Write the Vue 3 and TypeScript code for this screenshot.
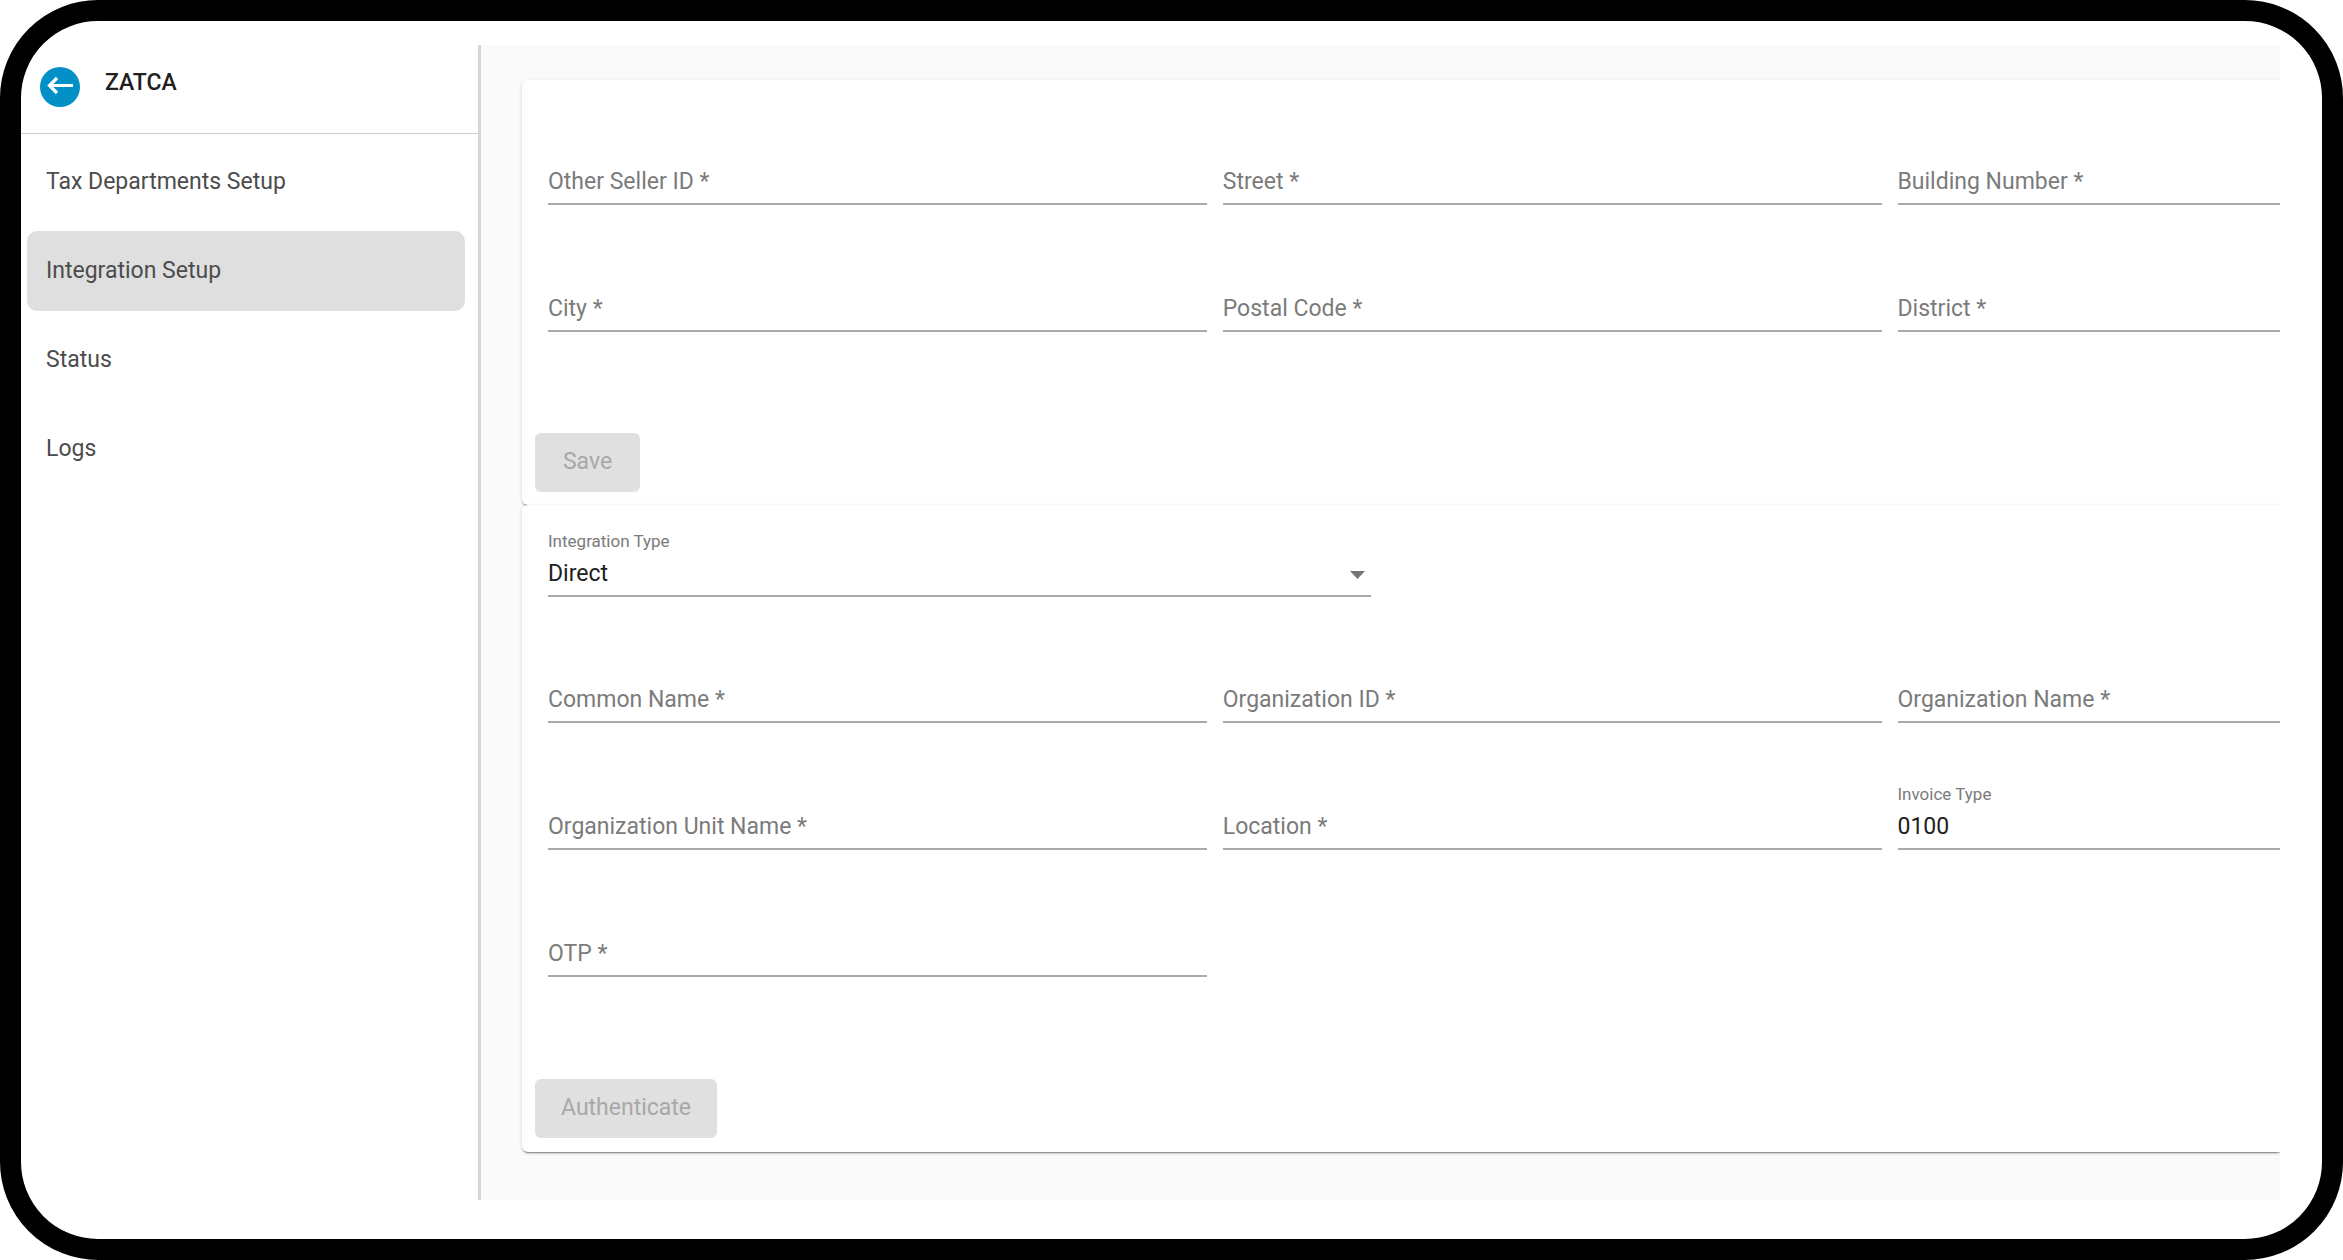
<script setup lang="ts">
import { ref } from 'vue'

interface Field {
  id: string
  label: string
  value: string
}

const navItems = ['Tax Departments Setup', 'Integration Setup', 'Status', 'Logs']
const activeItem = ref('Integration Setup')

const addressFields = ref<Field[]>([
  { id: 'seller', label: 'Other Seller ID *', value: '' },
  { id: 'street', label: 'Street *', value: '' },
  { id: 'building', label: 'Building Number *', value: '' },
  { id: 'city', label: 'City *', value: '' },
  { id: 'postal', label: 'Postal Code *', value: '' },
  { id: 'district', label: 'District *', value: '' },
])

const integrationType = ref('Direct')

const organizationFields = ref<Field[]>([
  { id: 'common', label: 'Common Name *', value: '' },
  { id: 'org-id', label: 'Organization ID *', value: '' },
  { id: 'org-name', label: 'Organization Name *', value: '' },
  { id: 'org-unit', label: 'Organization Unit Name *', value: '' },
  { id: 'location', label: 'Location *', value: '' },
  { id: 'invoice', label: 'Invoice Type', value: '0100' },
  { id: 'otp', label: 'OTP *', value: '' },
])
</script>

<template>
  <div class="frame">
    <aside class="sidebar">
      <header class="sidebar-head">
        <button class="back" type="button" aria-label="Back">
          <svg viewBox="0 0 40 40" width="40" height="40" aria-hidden="true">
            <circle cx="20" cy="20" r="20" fill="#0290c7" />
            <path d="M33 18.500H9.500M17 11l-7.500 7.500L17 26" fill="none" stroke="#fff" stroke-width="3.200" />
          </svg>
        </button>
        <h1>ZATCA</h1>
      </header>
      <nav>
        <a
          v-for="item in navItems"
          :key="item"
          href="#"
          :class="{ active: item === activeItem }"
          @click.prevent="activeItem = item"
        >{{ item }}</a>
      </nav>
    </aside>

    <main>
      <form class="card address" @submit.prevent>
        <div class="fields">
          <div v-for="f in addressFields" :key="f.id" class="field" :class="{ filled: f.value }">
            <label :for="f.id">{{ f.label }}</label>
            <input :id="f.id" v-model="f.value" type="text" />
          </div>
        </div>
        <button class="submit" type="submit" disabled>Save</button>
      </form>

      <form class="card integration" @submit.prevent>
        <div class="field filled type">
          <label for="type">Integration Type</label>
          <select id="type" v-model="integrationType">
            <option>Direct</option>
          </select>
          <svg class="caret" viewBox="0 0 15 8" width="15" height="8" aria-hidden="true">
            <path d="M0 0h15L7.500 8z" fill="#757575" />
          </svg>
        </div>
        <div class="fields">
          <div v-for="f in organizationFields" :key="f.id" class="field" :class="{ filled: f.value }">
            <label :for="f.id">{{ f.label }}</label>
            <input :id="f.id" v-model="f.value" type="text" />
          </div>
        </div>
        <button class="submit" type="submit" disabled>Authenticate</button>
      </form>
    </main>
  </div>
</template>

<style>
body {
  margin: 0;
  background: #fff;
}
</style>

<style scoped>
* {
  box-sizing: border-box;
}

.frame {
  display: flex;
  padding: 24px 42px 39px 0;
  border: 21px solid #000;
  border-radius: 98px;
  background: #fff;
  font-family: Roboto, "Liberation Sans", sans-serif;
  font-size: 23px;
  line-height: 26px;
}

.sidebar {
  flex: none;
  width: 460px;
  border-right: 3px solid #d6d6d6;
}

.sidebar-head {
  display: flex;
  align-items: flex-start;
  gap: 25px;
  height: 89px;
  padding: 22px 19px 0;
  border-bottom: 1px solid #cecece;
}

.back {
  width: 40px;
  height: 40px;
  padding: 0;
  border: 0;
  background: none;
}

.back svg {
  display: block;
}

h1 {
  margin: 3px 0 0;
  color: #212121;
  font-size: 23px;
  font-weight: 500;
  line-height: 26px;
}

nav {
  display: flex;
  flex-direction: column;
  gap: 9px;
  padding: 8px 13px 0 6px;
}

nav a {
  padding: 27px 19px;
  border-radius: 10px;
  color: #4c4c4c;
  text-decoration: none;
}

nav a.active {
  background: #dfdfdf;
}

main {
  flex: 1;
  min-width: 0;
  padding: 35px 0 48px 41px;
  overflow: hidden;
  background: #fafafa;
}

.card {
  padding: 59px 0 13px 26px;
  border-radius: 6px 0 0 6px;
  background: #fff;
  box-shadow:
    0 3px 2px -2px rgba(0, 0, 0, 0.3),
    0 1px 1px 0 rgba(0, 0, 0, 0.2),
    0 1px 4px 0 rgba(0, 0, 0, 0.12);
}

.integration {
  padding-top: 26px;
  padding-bottom: 14px;
}

.fields {
  display: grid;
  grid-template-columns: 31fr 31fr 18fr;
  gap: 61px 16px;
}

.field {
  display: grid;
  grid-template-rows: 20px 34px;
  row-gap: 10px;
  border-bottom: 2px solid #aaa;
}

.field label {
  grid-area: 2 / 1;
  color: #7b7b7b;
  pointer-events: none;
}

.field.filled label {
  grid-area: 1 / 1;
  font-size: 17px;
  line-height: 20px;
}

.field input,
.field select {
  grid-area: 2 / 1;
  width: 100%;
  min-width: 0;
  padding: 0 0 8px;
  border: 0;
  outline: 0;
  appearance: none;
  background: none;
  color: #212121;
  font: inherit;
}

.type {
  width: 823px;
  max-width: 48%;
  margin-bottom: 60px;
}

.caret {
  grid-area: 2 / 1;
  justify-self: end;
  margin: 10px 6px 0 0;
}

.submit {
  display: block;
  min-width: 105px;
  height: 59px;
  margin: 101px 0 0 -13px;
  padding: 0 26px 2px;
  border: 0;
  border-radius: 6px;
  background: #e0e0e0;
  color: #a8a8a8;
  font: inherit;
}

.integration .submit {
  margin-top: 102px;
}
</style>
